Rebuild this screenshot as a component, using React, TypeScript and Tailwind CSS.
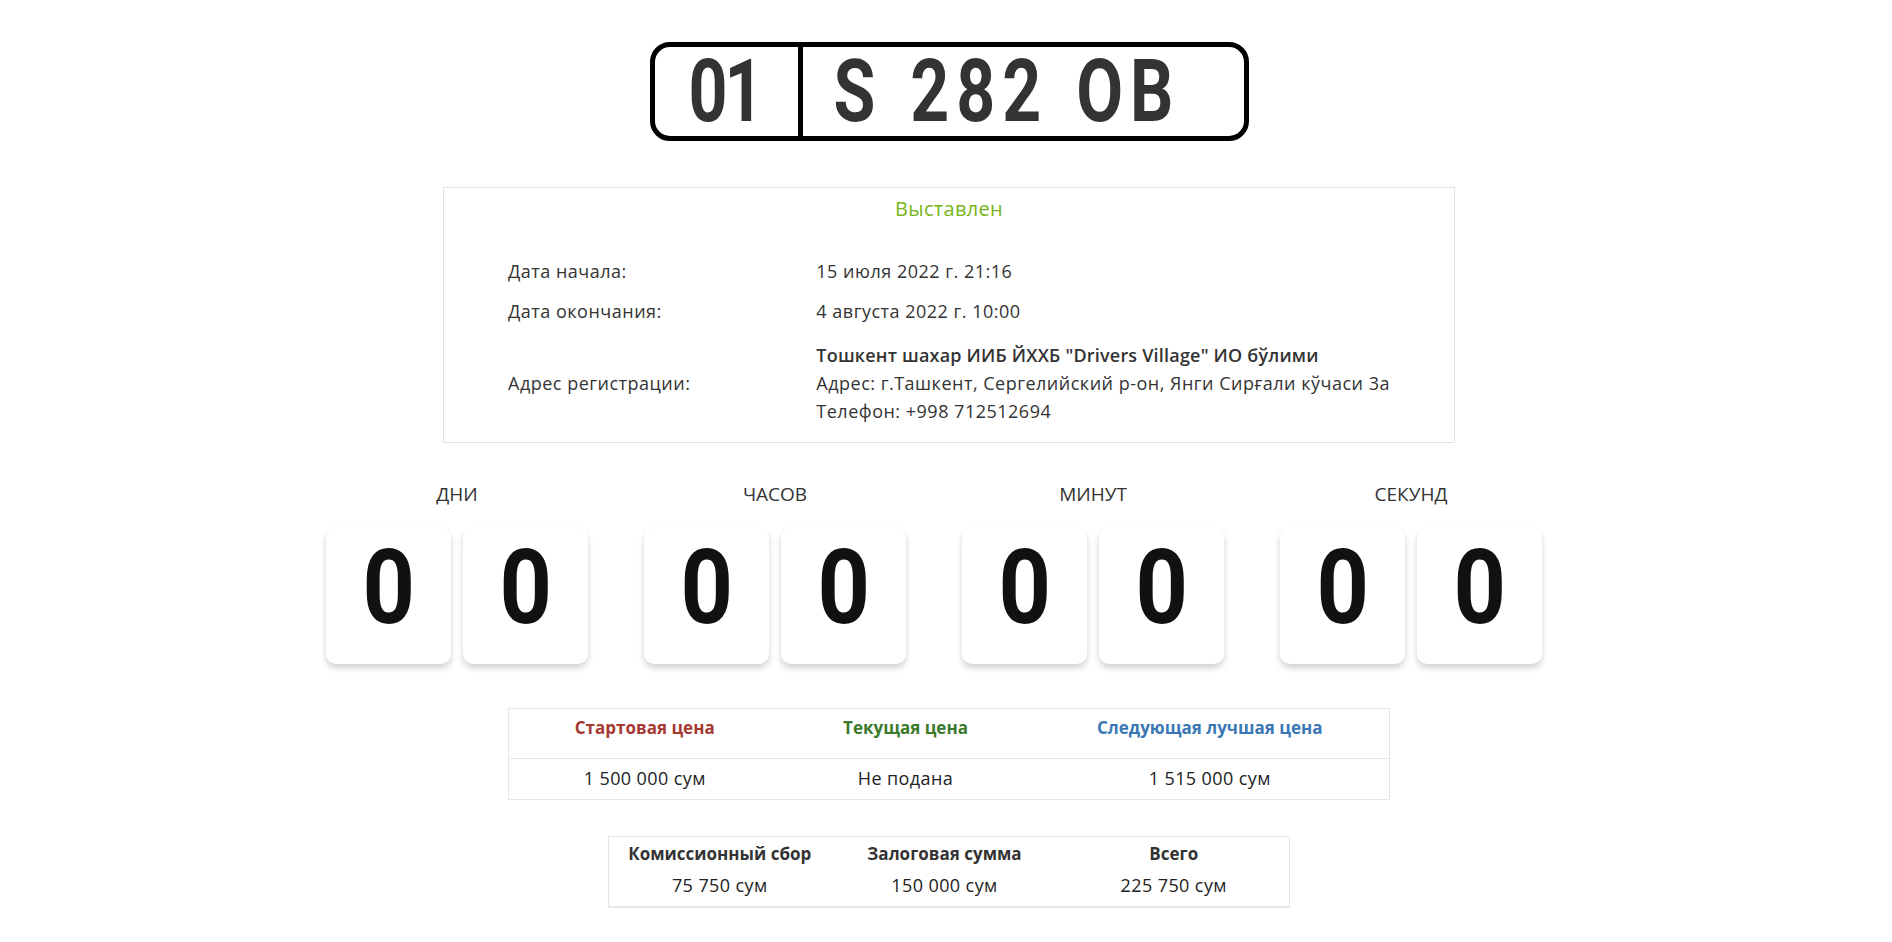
const digitFont = { fontFamily: 'Roboto, "DejaVu Sans", sans-serif' };

const Digit = ({ value }: { value: string }) => (
  <div className="w-[125px] h-[136px] bg-white rounded-[10px] shadow-[0_4px_6px_rgba(0,0,0,0.18)] flex items-center justify-center pb-[16px]">
    <span className="text-[104px] leading-none font-bold text-[#111] scale-x-[0.88]" style={digitFont}>
      {value}
    </span>
  </div>
);

const Counter = ({ label }: { label: string }) => (
  <div className="flex flex-col items-center">
    <div className="text-[19px] leading-[24px] text-[#333] mb-[22px]">{label}</div>
    <div className="flex gap-[12px]">
      <Digit value="0" />
      <Digit value="0" />
    </div>
  </div>
);

export default function App() {
  return (
    <div
      className="min-h-screen bg-white flex flex-col items-center text-[#333] pl-[6px]"
      style={{ fontFamily: '"Open Sans", Roboto, sans-serif' }}
    >
      {/* plate */}
      <div
        className="mt-[42px] w-[599px] h-[99px] border-[5px] border-black rounded-[20px] flex text-[#333] whitespace-nowrap"
        style={digitFont}
      >
        <div className="w-[143px] shrink-0 flex items-center justify-center text-[68px] font-bold leading-[72px]">
          <span className="scale-y-[1.28] tracking-[-3px] pr-[3px]">01</span>
        </div>
        <div className="w-[5px] shrink-0 bg-black" />
        <div className="flex-1 min-w-0 flex items-center pl-[31px] text-[68px] font-bold leading-[72px]">
          <span className="scale-y-[1.28] tracking-[7px] [word-spacing:4px]">S 282 OB</span>
        </div>
      </div>

      {/* info box */}
      <div className="mt-[46px] w-[1012px] h-[256px] border border-[#e2e2e2] px-[64px]">
        <div className="text-center text-[#77b516] text-[20px] mt-[6px] tracking-[0.3px]">Выставлен</div>
        <table className="mt-[27px] w-full text-[18px] tracking-[0.5px] text-[#333] whitespace-nowrap">
          <tbody>
            <tr className="h-[40px]">
              <td className="w-[309px]">Дата начала:</td>
              <td>15 июля 2022 г. 21:16</td>
            </tr>
            <tr className="h-[40px]">
              <td>Дата окончания:</td>
              <td>4 августа 2022 г. 10:00</td>
            </tr>
            <tr>
              <td className="pt-[10px]">Адрес регистрации:</td>
              <td className="pt-[10px] leading-[28px]">
                <div className="font-semibold tracking-[0.2px]">Тошкент шахар ИИБ ЙХХБ "Drivers Village" ИО бўлими</div>
                <div>Адрес: г.Ташкент, Сергелийский р-он, Янги Сирғали кўчаси 3а</div>
                <div>Телефон: +998 712512694</div>
              </td>
            </tr>
          </tbody>
        </table>
      </div>

      {/* countdown */}
      <div className="mt-[39px] flex gap-[56px] pr-[30px]">
        <Counter label="ДНИ" />
        <Counter label="ЧАСОВ" />
        <Counter label="МИНУТ" />
        <Counter label="СЕКУНД" />
      </div>

      {/* prices */}
      <table className="mt-[44px] w-[882px] border border-[#e6e6e6] text-center">
        <tbody>
          <tr className="h-[50px] border-b border-[#e6e6e6] text-[17px] font-bold">
            <td className="w-[272px] pb-[11px] text-[#a63a32]">Стартовая цена</td>
            <td className="w-[250px] pb-[11px] text-[#3b7a2c]">Текущая цена</td>
            <td className="pb-[11px] text-[#3a77b4]">Следующая лучшая цена</td>
          </tr>
          <tr className="h-[41px] text-[18px] tracking-[0.4px] text-[#222]">
            <td className="pb-[2px]">1 500 000 сум</td>
            <td className="pb-[2px]">Не подана</td>
            <td className="pb-[2px]">1 515 000 сум</td>
          </tr>
        </tbody>
      </table>

      {/* fees */}
      <table className="mt-[36px] mb-[34px] w-[682px] border border-[#e6e6e6] border-b-2 text-center">
        <tbody>
          <tr className="h-[32px] text-[17px] font-bold text-[#333]">
            <td className="w-[222px] pt-[2px]">Комиссионный сбор</td>
            <td className="w-[228px] pt-[2px]">Залоговая сумма</td>
            <td className="pt-[2px]">Всего</td>
          </tr>
          <tr className="h-[38px] text-[18px] tracking-[0.4px] text-[#222]">
            <td className="pb-[4px]">75 750 сум</td>
            <td className="pb-[4px]">150 000 сум</td>
            <td className="pb-[4px]">225 750 сум</td>
          </tr>
        </tbody>
      </table>
    </div>
  );
}
